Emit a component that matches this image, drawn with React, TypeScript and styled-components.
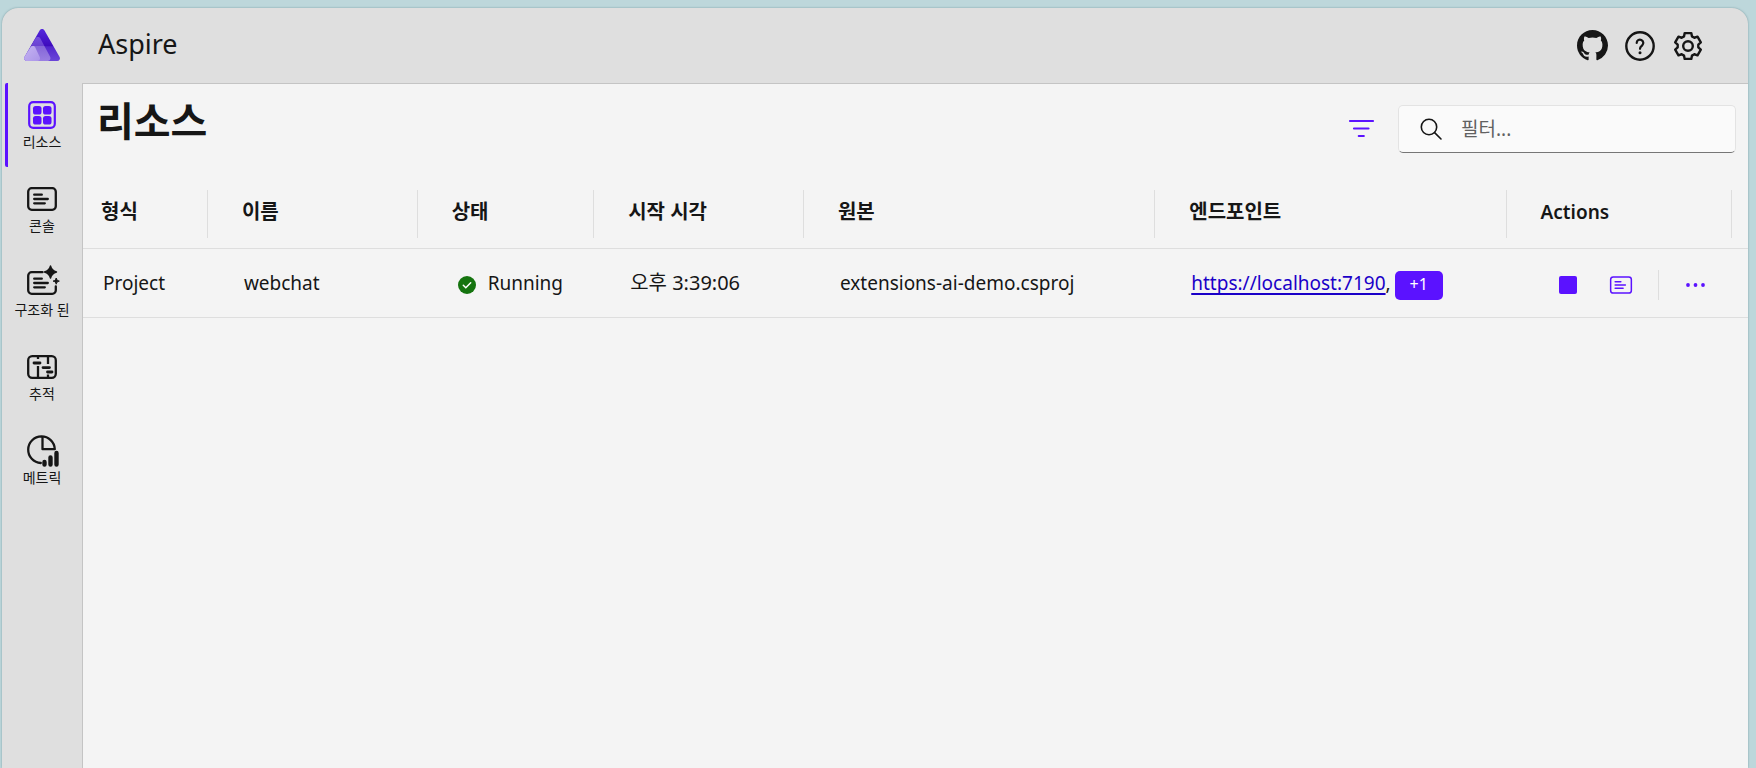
import React from "react";
import styled, { createGlobalStyle } from "styled-components";

const accent = "#5b12ff";
const ink = "#161616";
const line = "#dedede";

const GlobalStyle = createGlobalStyle`
  * { box-sizing: border-box; }
  body {
    margin: 0;
    background: #bdd7db;
    color: ${ink};
    font-family: "Noto Sans", "Noto Sans CJK KR", sans-serif;
    font-size: 19px;
    line-height: 28px;
  }
  button { font: inherit; color: inherit; background: none; border: 0; padding: 0; cursor: pointer; }
`;

const Page = styled.div`
  padding: 8px 8px 0 2px;
`;

const Window = styled.div`
  display: grid;
  grid-template-columns: 80px minmax(0, 1fr);
  grid-template-rows: 75px 1fr;
  min-height: calc(100vh - 8px);
  background: #dfdfdf;
  border-radius: 16px 16px 0 0;
  box-shadow: 0 0 2px rgba(40, 90, 100, 0.5);
  overflow: hidden;
`;

const LogoLink = styled.a`
  display: flex;
  align-items: center;
  justify-content: center;
  padding-bottom: 1px;
`;

const TopBar = styled.header`
  display: flex;
  align-items: center;
  justify-content: space-between;
  padding: 0 44px 0 16px;
`;

const AppName = styled.span`
  font-size: 27px;
  line-height: 36px;
  padding-bottom: 4px;
`;

const TopActions = styled.div`
  display: flex;
  gap: 16px;
`;

const IconButton = styled.button`
  display: flex;
  align-items: center;
  justify-content: center;
  width: 32px;
  height: 32px;
`;

const Nav = styled.nav`
  display: flex;
  flex-direction: column;
`;

const NavItem = styled.a<{ $active?: boolean }>`
  display: flex;
  flex-direction: column;
  align-items: center;
  gap: 1px;
  height: 84px;
  padding: 16px 6px 0 0;
  margin-left: 3px;
  border-left: 3px solid ${(p) => (p.$active ? accent : "transparent")};
  border-radius: 2px;
  text-decoration: none;
  color: ${ink};
  font-size: 14px;
  line-height: 20px;
  white-space: nowrap;
  svg { color: ${(p) => (p.$active ? accent : ink)}; flex: none; overflow: visible; }
`;

const Main = styled.main`
  background: #f4f4f4;
  border-left: 1px solid #c4c4c4;
  border-top: 1px solid #c4c4c4;
`;

const Toolbar = styled.div`
  display: flex;
  align-items: flex-start;
  justify-content: space-between;
  padding: 11px 12px 0 14px;
  height: 88px;
`;

const Title = styled.h1`
  margin: 0;
  font-size: 40px;
  line-height: 52px;
  font-weight: 600;
`;

const Tools = styled.div`
  display: flex;
  align-items: center;
  gap: 21px;
  margin-top: 10px;
`;

const SearchBox = styled.label`
  display: flex;
  align-items: center;
  gap: 16px;
  width: 338px;
  height: 48px;
  padding: 0 20px;
  background: #fafafa;
  border: 1px solid #e3e3e3;
  border-bottom-color: #767676;
  border-radius: 5px;
`;

const SearchInput = styled.input`
  flex: 1;
  min-width: 0;
  border: 0;
  outline: 0;
  background: none;
  font: inherit;
  color: inherit;
  &::placeholder { color: #616161; opacity: 1; }
`;

const Table = styled.table`
  width: 100%;
  table-layout: fixed;
  border-collapse: separate;
  border-spacing: 0;
`;

const HeadCell = styled.th`
  padding: 18px 0 10px;
  text-align: left;
  font-size: 20px;
  font-weight: 600;
  border-bottom: 1px solid ${line};
  &:lang(en) { font-size: 19px; }
  &:last-child { padding-right: 16px; }
`;

const HeadLabel = styled.div`
  height: 48px;
  padding: 8px 0 0 34px;
  border-right: 1px solid ${line};
  line-height: 28px;
  th:first-child > & { padding-left: 18px; }
`;

const Cell = styled.td`
  height: 69px;
  padding: 0 0 0 36px;
  border-bottom: 1px solid ${line};
  white-space: nowrap;
  &:first-child { padding-left: 20px; }
`;

const Time = styled.time`
  font-size: 20px;
`;

const Status = styled.div`
  display: flex;
  align-items: center;
  gap: 12px;
  padding-left: 4px;
  svg { margin-top: 3px; }
`;

const Endpoints = styled.div`
  display: flex;
  align-items: center;
  gap: 4px;
`;

const Endpoint = styled.a`
  color: #1a00c8;
  text-decoration-thickness: 2px;
  text-underline-offset: 3px;
  text-decoration-skip-ink: none;
`;

const MoreBadge = styled.button`
  width: 48px;
  height: 29px;
  margin-top: 4px;
  padding-bottom: 3px;
  background: ${accent};
  color: #fff;
  border-radius: 5px;
  font-size: 16px;
  line-height: 24px;
`;

const Actions = styled.div`
  display: flex;
  align-items: center;
  gap: 21px;
  padding: 3px 0 0 9px;
  color: ${accent};
`;

const Divider = styled.span`
  width: 1px;
  height: 30px;
  background: ${line};
`;

const stroke = {
  fill: "none",
  stroke: "currentColor",
  strokeWidth: 2.4,
  strokeLinecap: "round" as const,
  strokeLinejoin: "round" as const,
};

const Logo = () => (
  <svg width="36" height="32" viewBox="0 0 36 32" aria-hidden="true">
    <defs>
      <linearGradient id="deep" x1="0" y1="0" x2="0" y2="1">
        <stop offset="0" stopColor="#5529dd" />
        <stop offset="0.54" stopColor="#3d0abc" />
        <stop offset="0.55" stopColor="#5227cc" />
        <stop offset="1" stopColor="#6a45d8" />
      </linearGradient>
      <linearGradient id="mid" x1="0" y1="0" x2="0" y2="1">
        <stop offset="0" stopColor="#7650e0" />
        <stop offset="0.38" stopColor="#6a42d0" />
        <stop offset="0.39" stopColor="#8567d8" />
        <stop offset="1" stopColor="#9a7fe2" />
      </linearGradient>
      <linearGradient id="pale" x1="0" y1="0" x2="1" y2="1">
        <stop offset="0" stopColor="#c5b4f2" />
        <stop offset="1" stopColor="#ab95e8" />
      </linearGradient>
    </defs>
    <path fill="url(#deep)" d="M15.600 1.400a2.800 2.800 0 0 1 4.900 0L35.600 28a2.700 2.700 0 0 1-2.400 4H3a2.700 2.700 0 0 1-2.500-4z" />
    <path fill="url(#mid)" d="M11.600 9.200c1-1.700 3.600-1.700 4.800.2L26 27.600c1.300 2.300-.1 4.400-2.600 4.400H3a2.700 2.700 0 0 1-2.500-4z" />
    <path fill="url(#pale)" d="M6.600 18.200c1.200-1.700 3.700-1.500 4.700.3L15.700 28c1 2.200-.3 4-2.500 4H3a2.700 2.700 0 0 1-2.500-4z" />
  </svg>
);

const GitHubIcon = () => (
  <svg width="31" height="31" viewBox="0 0 16 16" fill="currentColor" aria-hidden="true">
    <path d="M8 0C3.58 0 0 3.58 0 8c0 3.54 2.29 6.53 5.47 7.59.4.07.55-.17.55-.38 0-.19-.01-.82-.01-1.49-2.01.37-2.53-.49-2.69-.94-.09-.23-.48-.94-.82-1.13-.28-.15-.68-.52-.01-.53.63-.01 1.08.58 1.23.82.72 1.21 1.87.87 2.33.66.07-.52.28-.87.51-1.07-1.78-.2-3.64-.89-3.64-3.95 0-.87.31-1.59.82-2.15-.08-.2-.36-1.02.08-2.12 0 0 .67-.21 2.2.82.64-.18 1.32-.27 2-.27.68 0 1.36.09 2 .27 1.53-1.04 2.2-.82 2.2-.82.44 1.1.16 1.92.08 2.12.51.56.82 1.27.82 2.15 0 3.07-1.87 3.75-3.65 3.95.29.25.54.73.54 1.48 0 1.07-.01 1.93-.01 2.2 0 .21.15.46.55.38A8.013 8.013 0 0016 8c0-4.420-3.580-8-8-8z" />
  </svg>
);

const HelpIcon = () => (
  <svg width="30" height="30" viewBox="0 0 30 30" aria-hidden="true">
    <circle cx="15" cy="15" r="13.700" {...stroke} />
    <path d="M11.700 12a3.300 3.300 0 1 1 5.500 2.400c-1.200 1.100-2.200 1.700-2.200 3.400" {...stroke} strokeWidth={2.2} />
    <circle cx="15" cy="21.700" r="1.500" fill="currentColor" />
  </svg>
);

const GearIcon = () => {
  const points = [0, 60, 120, 180, 240, 300].flatMap((deg) =>
    [[-4, -9.6], [-3.3, -12.9], [3.3, -12.9], [4, -9.6]].map(([x, y]) => {
      const a = (deg * Math.PI) / 180;
      const px = 15 + x * Math.cos(a) - y * Math.sin(a);
      const py = 15 + x * Math.sin(a) + y * Math.cos(a);
      return `${px.toFixed(2)},${py.toFixed(2)}`;
    })
  );
  return (
    <svg width="30" height="30" viewBox="0 0 30 30" aria-hidden="true">
      <polygon points={points.join(" ")} {...stroke} />
      <circle cx="15" cy="15" r="4.800" {...stroke} />
    </svg>
  );
};

const ResourcesIcon = () => (
  <svg width="32" height="32" viewBox="0 0 32 32" aria-hidden="true">
    <rect x="3.200" y="3.200" width="25.600" height="25.600" rx="4" {...stroke} strokeWidth={2.2} />
    <g fill="currentColor">
      <rect x="7" y="7" width="8.500" height="8.500" rx="2.600" />
      <rect x="17" y="7" width="8.500" height="8.500" rx="2.600" />
      <rect x="7" y="17" width="8.500" height="8.500" rx="2.600" />
      <rect x="17" y="17" width="8.500" height="8.500" rx="2.600" />
    </g>
  </svg>
);

const ConsoleIcon = ({ size = 32, weight = 2.3 }: { size?: number; weight?: number }) => (
  <svg width={size} height={size} viewBox="0 0 32 32" aria-hidden="true">
    <g {...stroke} strokeWidth={weight}>
      <rect x="2.200" y="5.200" width="27.600" height="21.600" rx="3.500" />
      <path d="M8.200 11.700h7.600M8.200 16h13.600M8.200 20.300h10.600" />
    </g>
  </svg>
);

const StructuredIcon = () => (
  <svg width="32" height="32" viewBox="0 0 32 32" aria-hidden="true">
    <g {...stroke} strokeWidth={2.3}>
      <path d="M16.500 5.200H5.700a3.500 3.500 0 0 0-3.500 3.500v14.600a3.500 3.500 0 0 0 3.500 3.500h20.600a3.500 3.500 0 0 0 3.500-3.500V19.500" />
      <path d="M8.200 11.700h7.600M8.200 16h13.600M8.200 20.300h10.600" />
    </g>
    <g fill="currentColor" stroke="currentColor" strokeLinejoin="round">
      <path d="M24.500-1c.9 3.500 2.500 5.100 6 6-3.500.9-5.100 2.500-6 6-.9-3.500-2.500-5.100-6-6 3.500-.9 5.100-2.500 6-6z" strokeWidth="1.400" />
      <path d="M30.200 11c.4 1.900 1.200 2.700 3.100 3.100-1.900.4-2.700 1.200-3.100 3.100-.4-1.900-1.200-2.700-3.100-3.100 1.900-.4 2.700-1.200 3.100-3.100z" strokeWidth="1" />
    </g>
  </svg>
);

const TracesIcon = () => (
  <svg width="32" height="32" viewBox="0 0 32 32" aria-hidden="true">
    <g {...stroke} strokeWidth={2.3}>
      <rect x="2.200" y="5.200" width="27.600" height="21.600" rx="4" />
      <path strokeLinecap="butt" d="M12 5v3M12 15V27M22 5v8M22 23.500V27" />
      <path strokeWidth="2.800" d="M8 12h6M17 16.600h6.500M21.500 21h4.500" />
    </g>
  </svg>
);

const MetricsIcon = () => (
  <svg width="32" height="32" viewBox="0 0 32 32" aria-hidden="true">
    <path d="M14.800 28A13.300 13.300 0 1 1 28.800 14.200H16.500V1.600" {...stroke} strokeWidth={2.3} />
    <g stroke="currentColor" strokeWidth="4.400" strokeLinecap="round">
      <path d="M18.500 27v2.500M24.500 22.500v7M30.500 18v11.500" />
    </g>
  </svg>
);

const FilterIcon = () => (
  <svg width="28" height="28" viewBox="0 0 28 28" aria-hidden="true" color={accent}>
    <path d="M3 6h23M7 13.500h14.500M11.800 21h5" {...stroke} strokeWidth={2.2} />
  </svg>
);

const SearchIcon = () => (
  <svg width="24" height="24" viewBox="0 0 24 24" aria-hidden="true">
    <circle cx="10" cy="10" r="7.700" {...stroke} strokeWidth={1.6} />
    <path d="m15.600 15.600 6.400 6.400" {...stroke} strokeWidth={1.6} />
  </svg>
);

const RunningIcon = () => (
  <svg width="18" height="18" viewBox="0 0 18 18" aria-hidden="true">
    <circle cx="9" cy="9" r="9" fill="#15740f" />
    <path d="m5.300 9.300 2.500 2.500 4.900-5" fill="none" stroke="#fff" strokeWidth="1.500" strokeLinecap="round" />
  </svg>
);

const StopIcon = () => (
  <svg width="18" height="18" viewBox="0 0 18 18" aria-hidden="true">
    <rect width="18" height="18" rx="2" fill="currentColor" />
  </svg>
);

const MoreIcon = () => (
  <svg width="20" height="20" viewBox="0 0 20 20" fill="currentColor" aria-hidden="true">
    <circle cx="2" cy="10" r="1.900" />
    <circle cx="9.500" cy="10" r="1.900" />
    <circle cx="17" cy="10" r="1.900" />
  </svg>
);

const navItems = [
  { label: "리소스", icon: <ResourcesIcon />, active: true },
  { label: "콘솔", icon: <ConsoleIcon /> },
  { label: "구조화 된", icon: <StructuredIcon /> },
  { label: "추적", icon: <TracesIcon /> },
  { label: "메트릭", icon: <MetricsIcon /> },
];

const columns = [
  { label: "형식", width: "7.5%" },
  { label: "이름", width: "12.6%" },
  { label: "상태", width: "10.6%" },
  { label: "시작 시각", width: "12.6%" },
  { label: "원본", width: "21.1%" },
  { label: "엔드포인트", width: "21.1%" },
  { label: "Actions", width: "14.5%", lang: "en" },
];

export default function App() {
  return (
    <Page lang="ko">
      <GlobalStyle />
      <Window>
        <LogoLink href="#" aria-label="Aspire">
          <Logo />
        </LogoLink>
        <TopBar>
          <AppName>Aspire</AppName>
          <TopActions>
            <IconButton aria-label="GitHub"><GitHubIcon /></IconButton>
            <IconButton aria-label="Help"><HelpIcon /></IconButton>
            <IconButton aria-label="Settings"><GearIcon /></IconButton>
          </TopActions>
        </TopBar>
        <Nav>
          {navItems.map((item) => (
            <NavItem key={item.label} href="#" $active={item.active}>
              {item.icon}
              {item.label}
            </NavItem>
          ))}
        </Nav>
        <Main>
          <Toolbar>
            <Title>리소스</Title>
            <Tools>
              <IconButton aria-label="Filter"><FilterIcon /></IconButton>
              <SearchBox>
                <SearchIcon />
                <SearchInput type="text" placeholder="필터..." aria-label="필터" />
              </SearchBox>
            </Tools>
          </Toolbar>
          <Table>
            <colgroup>
              {columns.map((c) => <col key={c.label} style={{ width: c.width }} />)}
            </colgroup>
            <thead>
              <tr>
                {columns.map((c) => (
                  <HeadCell key={c.label} scope="col" lang={c.lang}><HeadLabel>{c.label}</HeadLabel></HeadCell>
                ))}
              </tr>
            </thead>
            <tbody>
              <tr>
                <Cell>Project</Cell>
                <Cell>webchat</Cell>
                <Cell><Status><RunningIcon />Running</Status></Cell>
                <Cell><Time dateTime="15:39:06">오후 3:39:06</Time></Cell>
                <Cell>extensions-ai-demo.csproj</Cell>
                <Cell>
                  <Endpoints>
                    <span><Endpoint href="#">https://localhost:7190</Endpoint>,</span>
                    <MoreBadge>+1</MoreBadge>
                  </Endpoints>
                </Cell>
                <Cell>
                  <Actions>
                    <IconButton aria-label="Stop"><StopIcon /></IconButton>
                    <IconButton aria-label="Console"><ConsoleIcon size={24} weight={2} /></IconButton>
                    <Divider />
                    <IconButton aria-label="More"><MoreIcon /></IconButton>
                  </Actions>
                </Cell>
              </tr>
            </tbody>
          </Table>
        </Main>
      </Window>
    </Page>
  );
}
